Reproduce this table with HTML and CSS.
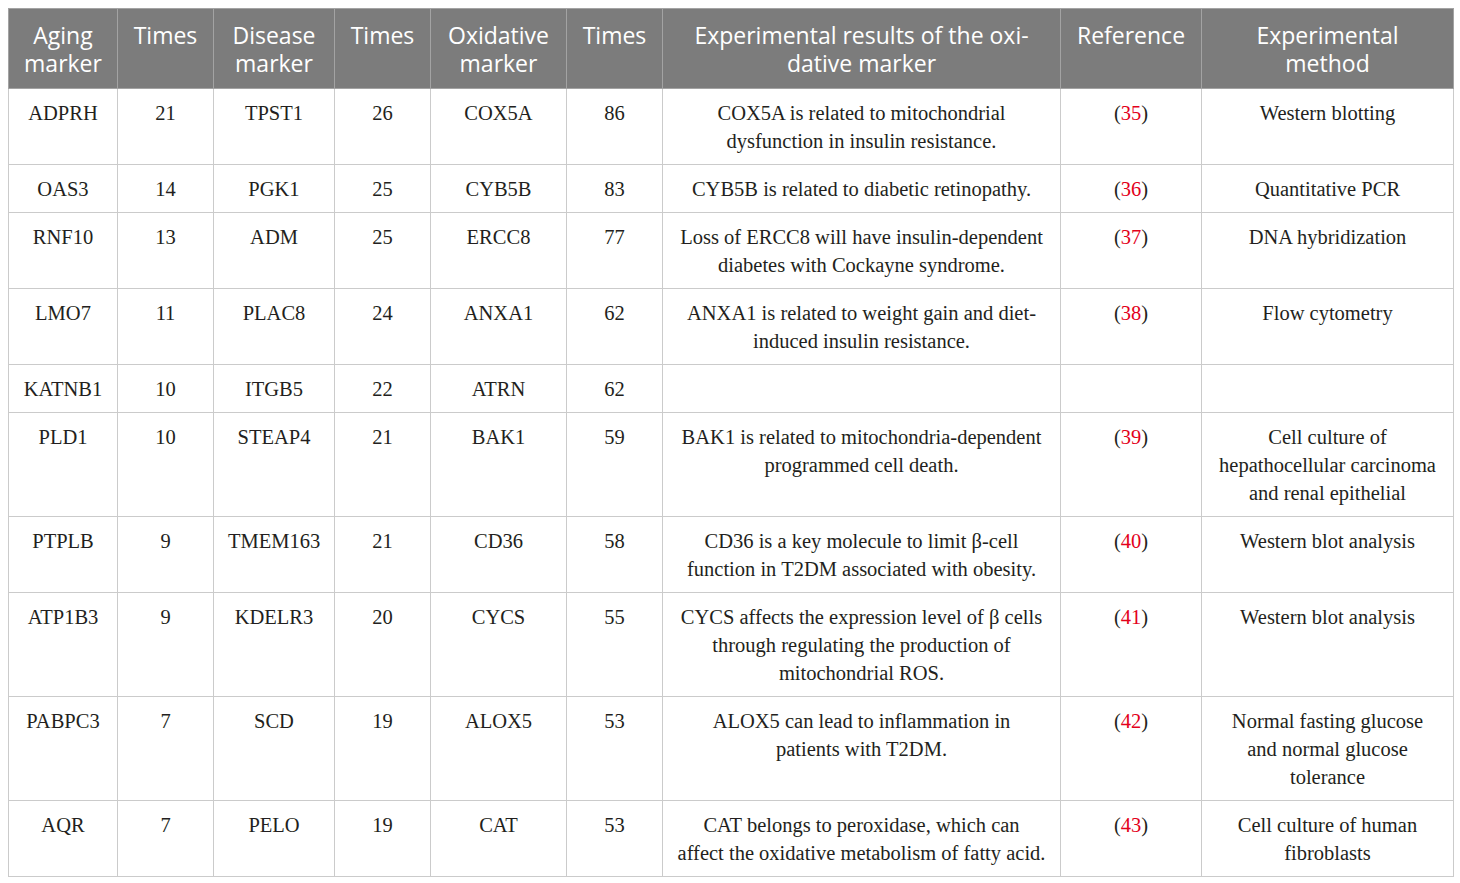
FILE: index.html
```html
<!DOCTYPE html>
<html>
<head>
<meta charset="utf-8">
<link rel="stylesheet" href="styles.css">
</head>
<body>
<table class="data">
<colgroup>
<col class="c1"><col class="c2"><col class="c3"><col class="c4"><col class="c5"><col class="c6"><col class="c7"><col class="c8"><col class="c9">
</colgroup>
<thead>
<tr>
<th>Aging<br>marker</th><th>Times</th><th>Disease<br>marker</th><th>Times</th><th>Oxidative<br>marker</th><th>Times</th><th>Experimental results of the oxi-<br>dative marker</th><th>Reference</th><th>Experimental<br>method</th>
</tr>
</thead>
<tbody>
<tr><td>ADPRH</td><td>21</td><td>TPST1</td><td>26</td><td>COX5A</td><td>86</td><td>COX5A is related to mitochondrial<br>dysfunction in insulin resistance.</td><td>(<span class="ref">35</span>)</td><td>Western blotting</td></tr>
<tr><td>OAS3</td><td>14</td><td>PGK1</td><td>25</td><td>CYB5B</td><td>83</td><td>CYB5B is related to diabetic retinopathy.</td><td>(<span class="ref">36</span>)</td><td>Quantitative PCR</td></tr>
<tr><td>RNF10</td><td>13</td><td>ADM</td><td>25</td><td>ERCC8</td><td>77</td><td>Loss of ERCC8 will have insulin-dependent<br>diabetes with Cockayne syndrome.</td><td>(<span class="ref">37</span>)</td><td>DNA hybridization</td></tr>
<tr><td>LMO7</td><td>11</td><td>PLAC8</td><td>24</td><td>ANXA1</td><td>62</td><td>ANXA1 is related to weight gain and diet-<br>induced insulin resistance.</td><td>(<span class="ref">38</span>)</td><td>Flow cytometry</td></tr>
<tr><td>KATNB1</td><td>10</td><td>ITGB5</td><td>22</td><td>ATRN</td><td>62</td><td></td><td></td><td></td></tr>
<tr><td>PLD1</td><td>10</td><td>STEAP4</td><td>21</td><td>BAK1</td><td>59</td><td>BAK1 is related to mitochondria-dependent<br>programmed cell death.</td><td>(<span class="ref">39</span>)</td><td>Cell culture of<br>hepathocellular carcinoma<br>and renal epithelial</td></tr>
<tr><td>PTPLB</td><td>9</td><td>TMEM163</td><td>21</td><td>CD36</td><td>58</td><td>CD36 is a key molecule to limit β-cell<br>function in T2DM associated with obesity.</td><td>(<span class="ref">40</span>)</td><td>Western blot analysis</td></tr>
<tr><td>ATP1B3</td><td>9</td><td>KDELR3</td><td>20</td><td>CYCS</td><td>55</td><td>CYCS affects the expression level of β cells<br>through regulating the production of<br>mitochondrial ROS.</td><td>(<span class="ref">41</span>)</td><td>Western blot analysis</td></tr>
<tr><td>PABPC3</td><td>7</td><td>SCD</td><td>19</td><td>ALOX5</td><td>53</td><td>ALOX5 can lead to inflammation in<br>patients with T2DM.</td><td>(<span class="ref">42</span>)</td><td>Normal fasting glucose<br>and normal glucose<br>tolerance</td></tr>
<tr><td>AQR</td><td>7</td><td>PELO</td><td>19</td><td>CAT</td><td>53</td><td>CAT belongs to peroxidase, which can<br>affect the oxidative metabolism of fatty acid.</td><td>(<span class="ref">43</span>)</td><td>Cell culture of human<br>fibroblasts</td></tr>
</tbody>
</table>
</body>
</html>
```
FILE: styles.css
```css
html, body {
  margin: 0;
  padding: 0;
  background: #ffffff;
}
body {
  padding: 8px 0 0 8px;
}
.data {
  border-collapse: collapse;
  table-layout: fixed;
  width: 1445px;
}
.c1 { width: 109px; }
.c2 { width: 96px; }
.c3 { width: 121px; }
.c4 { width: 96px; }
.c5 { width: 136px; }
.c6 { width: 96px; }
.c7 { width: 398px; }
.c8 { width: 141px; }
.c9 { width: 252px; }
.data th, .data td {
  border: 1px solid #cbcbcb;
  text-align: center;
  vertical-align: top;
  padding: 0;
}
.data th {
  background: #7c7c7c;
  color: #ffffff;
  font-family: "Open Sans", "DejaVu Sans", sans-serif;
  font-weight: 400;
  font-size: 23px;
  line-height: 28px;
  padding: 12px 4px 11px;
  border-color: #a3a3a3;
}
.data td {
  font-family: "Liberation Serif", "Times New Roman", serif;
  font-size: 20.5px;
  line-height: 28px;
  color: #231f20;
  padding: 10px 4px 9px;
}
.ref {
  color: #e3001b;
}
```
